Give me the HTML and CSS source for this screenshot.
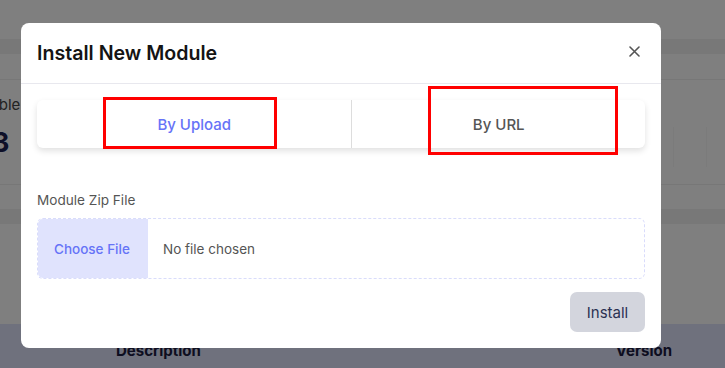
FILE: index.html
```html
<!DOCTYPE html>
<html lang="en">
<head>
  <meta charset="UTF-8" />
  <meta name="viewport" content="width=device-width, initial-scale=1.0"/>
  <title>Modules</title>
  <link rel="stylesheet" href="styles.css">
</head>
<body>
  <div class="page">
    <div class="strip"></div>
    <div class="stats">
      <div class="stat">
        <div class="stat-label">Available</div>
        <div class="stat-value">3</div>
      </div>
      <div class="stat-ghost"></div>
    </div>
    <div class="strip strip-low"></div>
    <div class="table-head">
      <span class="col-desc">Description</span>
      <span class="col-version">Version</span>
    </div>
  </div>

  <div class="backdrop">
    <div class="modal">
      <div class="modal-header">
        <h2>Install New Module</h2>
        <button class="close" aria-label="Close">
          <svg width="11" height="11" viewBox="0 0 11 11">
            <path d="M1 1 L10 10 M10 1 L1 10" stroke="#555" stroke-width="1.6" stroke-linecap="round"/>
          </svg>
        </button>
      </div>

      <div class="modal-body">
        <div class="tabs">
          <button class="tab active">By Upload</button>
          <button class="tab">By URL</button>
        </div>

        <div class="form-group">
          <label for="zip">Module Zip File</label>
          <label class="file-field" for="zip">
            <span class="file-btn">Choose File</span>
            <span class="file-name">No file chosen</span>
            <input type="file" id="zip" accept=".zip">
          </label>
        </div>

        <div class="actions">
          <button class="btn-install">Install</button>
        </div>
      </div>

      <!-- annotation boxes from the screenshot -->
      <div class="mark mark-upload"></div>
      <div class="mark mark-url"></div>
    </div>
  </div>
</body>
</html>
```

FILE: styles.css
```css
:root {
  --primary: #6673f7;
  --primary-soft: #e0e3fd;
  --text-dark: #141414;
  --text-muted: #555;
  --border: #e8e8ee;
}

body {
  margin: 0;
  font-family: 'Inter', sans-serif;
  background: #fff;
  overflow: hidden;
}

/* page behind the dialog */
.page {
  height: 368px;
  display: flex;
  flex-direction: column;
}

.strip {
  margin-top: 39px;
  height: 15px;
  background: #f1f1f1;
  border-bottom: 25px solid #fff;
}

.stats {
  border-top: 1px solid #eee;
  border-bottom: 1px solid #eee;
  height: 104px;
  display: flex;
  justify-content: space-between;
}

.stat {
  margin-left: -43px;
  padding-top: 15px;
}

.stat-label {
  font-size: 15px;
  color: #444;
}

.stat-value {
  margin: 12px 0 0 35px;
  font-size: 27px;
  font-weight: 700;
  color: #1c2150;
}

.stat-ghost {
  margin: 47px 18px 0 0;
  width: 32px;
  height: 40px;
  border-left: 1px solid #f6f6f6;
  border-right: 1px solid #f6f6f6;
}

.strip-low {
  margin-top: 24px;
  border-bottom: 100px solid #fff;
}

.table-head {
  flex: 1;
  background: #dee2fa;
  display: flex;
  align-items: flex-end;
  padding-bottom: 8px;
  font-size: 15px;
  font-weight: 700;
  color: #1a1a40;
}

.col-desc {
  margin-left: 116px;
}

.col-version {
  margin-left: auto;
  margin-right: 53px;
}

/* dialog */
.backdrop {
  position: fixed;
  inset: 0;
  background: rgba(0, 0, 0, 0.5);
}

.modal {
  position: relative;
  margin: 23px 0 0 21px;
  width: 640px;
  background: #fff;
  border-radius: 8px;
  box-sizing: border-box;
}

.modal-header {
  display: flex;
  align-items: center;
  justify-content: space-between;
  padding: 16px 21px 16px 16px;
  border-bottom: 1px solid var(--border);
}

.modal-header h2 {
  margin: 0;
  font-size: 19.6px;
  line-height: 28px;
  font-weight: 600;
  color: var(--text-dark);
}

.close {
  border: none;
  background: none;
  padding: 0;
  width: 11px;
  height: 11px;
  margin-top: -4px;
  display: flex;
  cursor: pointer;
}

.modal-body {
  padding: 16px;
}

.tabs {
  display: flex;
  height: 48px;
  border-radius: 6px;
  background: #fff;
  box-shadow: 0 3px 6px rgba(0, 0, 0, 0.12);
}

.tab {
  flex: 1 1 auto;
  border: none;
  background: none;
  font-family: inherit;
  font-size: 15px;
  font-weight: 500;
  color: var(--text-muted);
  cursor: pointer;
}

.tab + .tab {
  border-left: 1px solid #ddd;
}

.tab.active {
  color: var(--primary);
}

.form-group {
  display: flex;
  flex-direction: column;
  margin-top: 42px;
}

.form-group > label:first-child {
  font-size: 13.6px;
  line-height: 20px;
  color: var(--text-muted);
  margin-bottom: 8px;
}

.file-field {
  display: flex;
  align-items: stretch;
  height: 61px;
  border: 1px dashed #d9dcfb;
  border-radius: 6px;
  box-sizing: border-box;
  overflow: hidden;
  cursor: pointer;
}

.file-field input {
  display: none;
}

.file-btn {
  display: flex;
  align-items: center;
  width: 110px;
  box-sizing: border-box;
  padding-left: 16px;
  background: var(--primary-soft);
  color: var(--primary);
  font-size: 13.5px;
  font-weight: 500;
}

.file-name {
  display: flex;
  align-items: center;
  padding-left: 15px;
  font-size: 13.5px;
  color: var(--text-muted);
}

.actions {
  display: flex;
  justify-content: flex-end;
  margin-top: 13px;
}

.btn-install {
  width: 75px;
  height: 40px;
  border: none;
  border-radius: 7px;
  background: #d3d5dd;
  color: #2b3152;
  font-family: inherit;
  font-size: 15px;
  cursor: pointer;
}

.mark {
  position: absolute;
  border: 3px solid #f00;
  box-sizing: border-box;
  pointer-events: none;
}

.mark-upload {
  left: 82px;
  top: 74px;
  width: 174px;
  height: 52px;
}

.mark-url {
  left: 407px;
  top: 63px;
  width: 190px;
  height: 69px;
}
```
